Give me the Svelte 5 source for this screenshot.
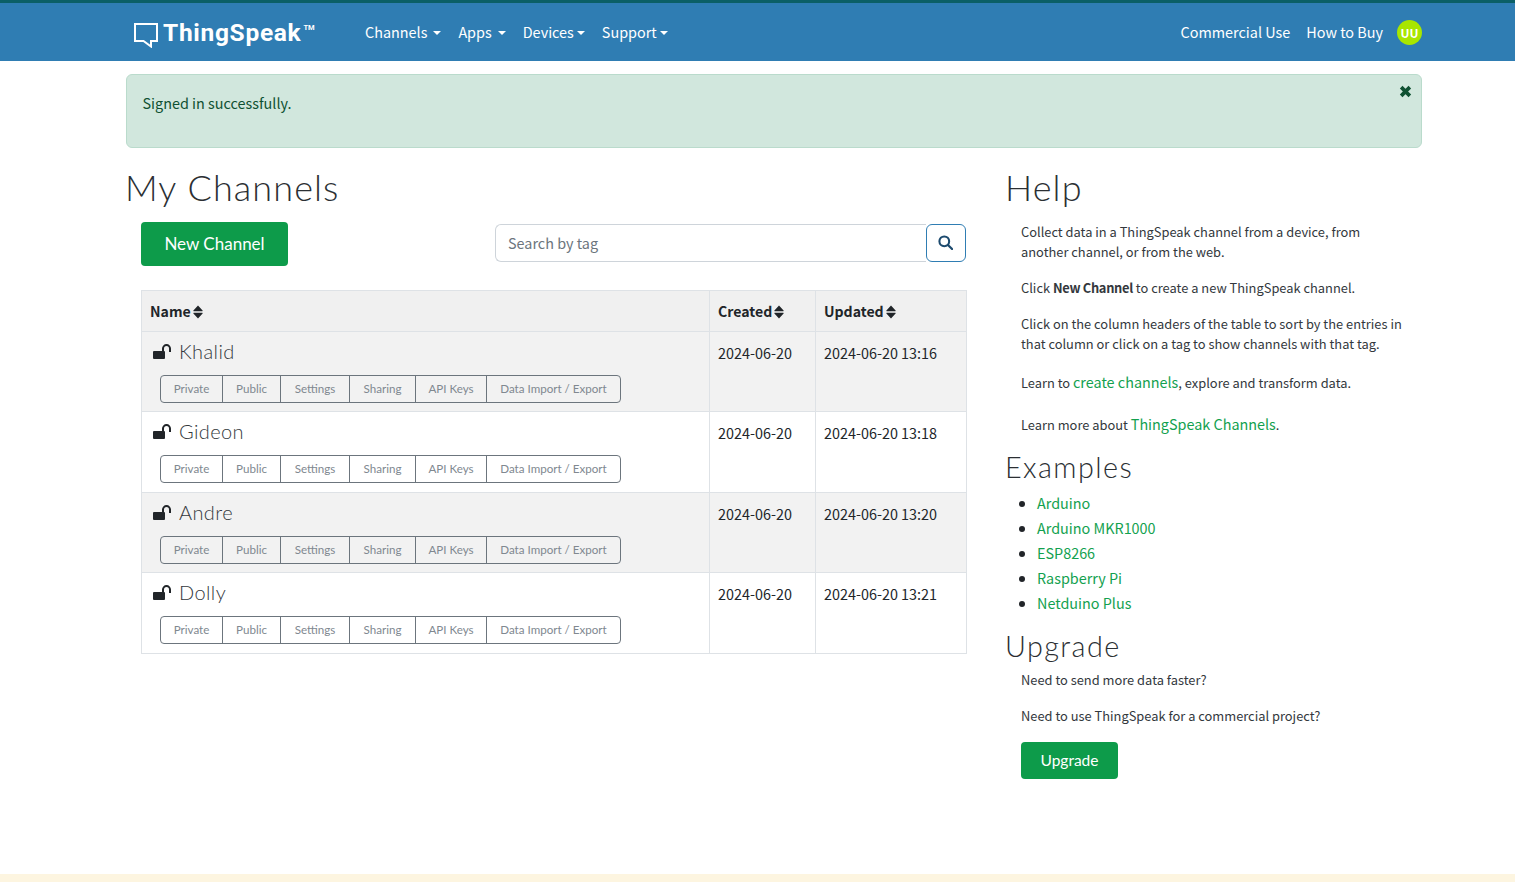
<script>
  const channels = [
    { name: "Khalid", created: "2024-06-20", updated: "2024-06-20 13:16" },
    { name: "Gideon", created: "2024-06-20", updated: "2024-06-20 13:18" },
    { name: "Andre", created: "2024-06-20", updated: "2024-06-20 13:20" },
    { name: "Dolly", created: "2024-06-20", updated: "2024-06-20 13:21" },
  ];
  const actions = ["Private", "Public", "Settings", "Sharing", "API Keys", "Data Import / Export"];
  const examples = ["Arduino", "Arduino MKR1000", "ESP8266", "Raspberry Pi", "Netduino Plus"];
</script>

{#snippet sortIcon()}
  <svg class="sort" viewBox="0 0 10 14" width="10" height="14">
    <path d="M5 0.5 L9.6 5.6 Q10 6.2 9.2 6.2 H0.8 Q0 6.2 0.4 5.6 Z M0.8 7.8 H9.2 Q10 7.8 9.6 8.4 L5 13.5 L0.4 8.4 Q0 7.8 0.8 7.8 Z" fill="#212529" />
  </svg>
{/snippet}

<div class="page">
  <nav class="navbar">
    <a class="brand" href="#top">
      <svg class="logo" viewBox="0 0 26 27" width="26" height="27">
        <path d="M2 3 H24 V20 H18 V25.5 L10.5 20 H2 Z" fill="none" stroke="#fff" stroke-width="2" />
      </svg>
      <span class="brand-name">ThingSpeak</span><span class="tm">TM</span>
    </a>
    <ul class="nav-left">
      <li class="wide"><a href="#top">Channels</a></li>
      <li class="wide"><a href="#top">Apps</a></li>
      <li><a href="#top">Devices</a></li>
      <li><a href="#top">Support</a></li>
    </ul>
    <div class="nav-right">
      <a href="#top">Commercial Use</a>
      <a href="#top">How to Buy</a>
      <span class="avatar">UU</span>
    </div>
  </nav>

  <main class="container">
    <div class="alert">
      Signed in successfully.
      <svg class="close" viewBox="0 0 12 12" width="13" height="13">
        <path d="M2 2 L10 10 M10 2 L2 10" stroke="#0f5132" stroke-width="3.4" />
      </svg>
    </div>

    <div class="row">
      <section class="left">
        <h1>My Channels</h1>
        <div class="toolbar">
          <button class="btn new-channel">New Channel</button>
          <div class="search">
            <input type="text" placeholder="Search by tag" />
            <button class="search-btn" aria-label="Search">
              <svg viewBox="0 0 16 16" width="15" height="15">
                <circle cx="6.7" cy="6.7" r="5.2" fill="none" stroke="#1c4a6e" stroke-width="2.2" />
                <path d="M10.6 10.6 L15 15" stroke="#1c4a6e" stroke-width="2.4" stroke-linecap="round" />
              </svg>
            </button>
          </div>
        </div>

        <table>
          <thead>
            <tr>
              <th class="col-name">Name {@render sortIcon()}</th>
              <th class="col-created">Created {@render sortIcon()}</th>
              <th>Updated {@render sortIcon()}</th>
            </tr>
          </thead>
          <tbody>
            {#each channels as channel, i}
              <tr class:odd={i % 2 === 0}>
                <td>
                  <div class="channel-name">
                    <svg class="lock" viewBox="0 0 18 15" width="18" height="15">
                      <rect x="0" y="7" width="12" height="8" rx="1" fill="#212529" />
                      <path d="M10 7 V4.6 A3.5 3.5 0 0 1 17 4.6 V8" fill="none" stroke="#212529" stroke-width="2" />
                    </svg>
                    <span>{channel.name}</span>
                  </div>
                  <div class="actions">
                    {#each actions as action}
                      <a href="#top">{action}</a>
                    {/each}
                  </div>
                </td>
                <td class="date">{channel.created}</td>
                <td class="date">{channel.updated}</td>
              </tr>
            {/each}
          </tbody>
        </table>
      </section>

      <aside class="right">
        <h2 class="help-title">Help</h2>
        <div class="indent help-text">
          <p>Collect data in a ThingSpeak channel from a device, from another channel, or from the web.</p>
          <p>Click <strong>New Channel</strong> to create a new ThingSpeak channel.</p>
          <p>Click on the column headers of the table to sort by the entries in that column or click on a tag to show channels with that tag.</p>
          <p class="link-line">Learn to <a href="#top">create channels</a>, explore and transform data.</p>
          <p class="link-line">Learn more about <a href="#top">ThingSpeak Channels</a>.</p>
        </div>

        <h3>Examples</h3>
        <ul class="examples">
          {#each examples as example}
            <li><a href="#top">{example}</a></li>
          {/each}
        </ul>

        <h3>Upgrade</h3>
        <div class="indent upgrade">
          <p>Need to send more data faster?</p>
          <p>Need to use ThingSpeak for a commercial project?</p>
          <button class="btn upgrade-btn">Upgrade</button>
        </div>
      </aside>
    </div>
  </main>

  <footer></footer>
</div>

<style>
  :global(body) {
    margin: 0;
    background: #fff;
    color: #212529;
    font-family: "Noto Sans CJK SC", "Open Sans", sans-serif;
  }

  .page {
    min-height: 882px;
    display: flex;
    flex-direction: column;
  }

  a {
    text-decoration: none;
  }

  /* NAVBAR */
  .navbar {
    height: 58px;
    border-top: 3px solid #0b5f66;
    background: #2f7db3;
    padding: 0 93px 0 133px;
    display: flex;
    align-items: center;
  }

  .brand {
    display: flex;
    align-items: center;
    color: #fff;
    width: 232px;
  }

  .logo {
    margin-right: 4px;
    margin-top: 5px;
  }

  .brand-name {
    font-family: "Roboto", sans-serif;
    font-weight: 700;
    font-size: 24.5px;
    letter-spacing: 0.7px;
  }

  .tm {
    font-family: "Roboto", sans-serif;
    font-size: 7.5px;
    font-weight: 700;
    margin: -10px 0 0 2px;
  }

  .nav-left {
    list-style: none;
    display: flex;
    gap: 17px;
    margin: -2px 0 0;
    padding: 0;
    flex: 1;
  }

  .nav-left a,
  .nav-right a {
    color: #fff;
    font-size: 14.4px;
  }

  .nav-left li::after {
    content: "";
    display: inline-block;
    margin-left: 3px;
    vertical-align: 3px;
    border-top: 4px solid #fff;
    border-left: 4px solid transparent;
    border-right: 4px solid transparent;
  }

  .nav-left li.wide::after {
    margin-left: 6px;
  }

  .nav-right {
    display: flex;
    align-items: center;
    gap: 16px;
  }

  .nav-right a {
    margin-top: -2px;
  }

  .avatar {
    width: 25px;
    height: 25px;
    border-radius: 50%;
    background: #a8e600;
    color: #fff;
    font-size: 12px;
    font-weight: 700;
    display: flex;
    align-items: center;
    justify-content: center;
    margin-left: -2px;
  }

  /* CONTAINER */
  .container {
    width: 1296px;
    margin: 13px auto 0 126px;
  }

  .alert {
    position: relative;
    box-sizing: border-box;
    height: 74px;
    padding: 16px 16px 16px 15.5px;
    border: 1px solid #badbcc;
    border-radius: 6px;
    background: #d1e7dd;
    color: #0f5132;
    font-size: 14.4px;
    line-height: 24px;
  }

  .close {
    position: absolute;
    top: 10px;
    right: 9px;
  }

  .row {
    display: flex;
    margin-top: 18px;
  }

  .left {
    width: 880px;
  }

  .right {
    width: 416px;
  }

  /* HEADINGS */
  h1,
  h2,
  h3 {
    font-family: "Lato", sans-serif;
    font-weight: 300;
    margin: 0 0 0 -1px;
    color: #2b2f33;
  }

  h1,
  .help-title {
    font-size: 36px;
    line-height: 43px;
    letter-spacing: 1.1px;
  }

  h3 {
    font-size: 28.8px;
    line-height: 34px;
    letter-spacing: 1.4px;
  }

  /* TOOLBAR */
  .toolbar {
    display: flex;
    align-items: center;
    justify-content: space-between;
    margin: 13px 40px 24px 15px;
  }

  .btn {
    border: none;
    border-radius: 4px;
    background: #0d9b4a;
    color: #fff;
    font-family: "Lato", sans-serif;
    padding: 0;
  }

  .new-channel {
    width: 147px;
    height: 44px;
    padding-bottom: 2px;
    font-size: 17px;
  }

  .search {
    display: flex;
    width: 471px;
    height: 38px;
    margin-bottom: 2px;
  }

  .search input {
    flex: 1;
    min-width: 0;
    box-sizing: border-box;
    border: 1px solid #ced4da;
    border-right: none;
    border-radius: 6px 0 0 6px;
    padding: 0 12px 2px;
    font-family: "Noto Sans CJK SC", sans-serif;
    font-size: 14.4px;
  }

  .search input::placeholder {
    color: #6c757d;
  }

  .search-btn {
    width: 40px;
    background: #fff;
    border: 1px solid #2f7db3;
    border-radius: 6px;
    display: flex;
    align-items: center;
    justify-content: center;
    padding: 0 2px 2px 0;
  }

  /* TABLE */
  table {
    width: 826px;
    margin-left: 15px;
    border-collapse: collapse;
    table-layout: fixed;
    font-size: 14.4px;
  }

  th,
  td {
    box-sizing: border-box;
    border: 1px solid #dee2e6;
    text-align: left;
    vertical-align: top;
  }

  th {
    background: #f0f0f0;
    height: 41px;
    padding: 0 8px 1px;
    vertical-align: middle;
    font-weight: 600;
    font-size: 14.1px;
  }

  .col-name {
    width: 568px;
  }

  .col-created {
    width: 106px;
  }

  .sort {
    vertical-align: -2px;
    margin-left: -1px;
  }

  td {
    padding: 6px 8px 0;
    height: 81px;
  }

  tr.odd td {
    height: 80px;
  }

  tr.odd td {
    background: #f2f2f2;
  }

  .date {
    padding-top: 10px;
    line-height: 22px;
  }

  .channel-name {
    display: flex;
    align-items: center;
    gap: 8px;
    padding: 0 3px;
    font-family: "Lato", sans-serif;
    font-weight: 300;
    font-size: 20px;
    line-height: 26px;
    color: #33383d;
    letter-spacing: 0.4px;
  }

  .actions {
    display: inline-grid;
    grid-template-columns: 61px 58px 69px 66px 71px 134px;
    box-sizing: border-box;
    margin: 11px 0 0 10px;
    border: 1px solid #6c757d;
    border-radius: 4px;
    height: 28px;
  }

  .actions a {
    display: flex;
    align-items: center;
    justify-content: center;
    padding-bottom: 1px;
    color: #808890;
    font-family: "Lato", sans-serif;
    font-size: 11.6px;
    border-left: 1px solid #6c757d;
  }

  .actions a:first-child {
    border-left: none;
  }

  /* HELP */
  .indent {
    padding-left: 15px;
    font-size: 12.87px;
    max-width: 385px;
  }

  .indent p {
    margin: 0 0 16px;
    line-height: 20px;
    color: #33383d;
  }

  .help-text {
    margin-top: 13px;
    margin-bottom: -4px;
  }

  .indent strong {
    font-weight: 600;
    letter-spacing: -0.3px;
  }

  .indent .link-line {
    line-height: 24px;
    margin-bottom: 17px;
  }

  .link-line a {
    color: #13a14f;
    font-size: 14.4px;
  }

  .examples {
    margin: 6px 0 14px;
    padding-left: 31px;
    font-size: 14.4px;
  }

  .examples li {
    line-height: 25px;
  }

  .examples a {
    color: #13a14f;
  }

  .upgrade {
    margin-top: 7px;
  }

  .upgrade-btn {
    width: 97px;
    height: 37px;
    padding-bottom: 1px;
    font-size: 15.5px;
  }

  footer {
    margin-top: auto;
    height: 8px;
    background: #fdf5e0;
  }
</style>
